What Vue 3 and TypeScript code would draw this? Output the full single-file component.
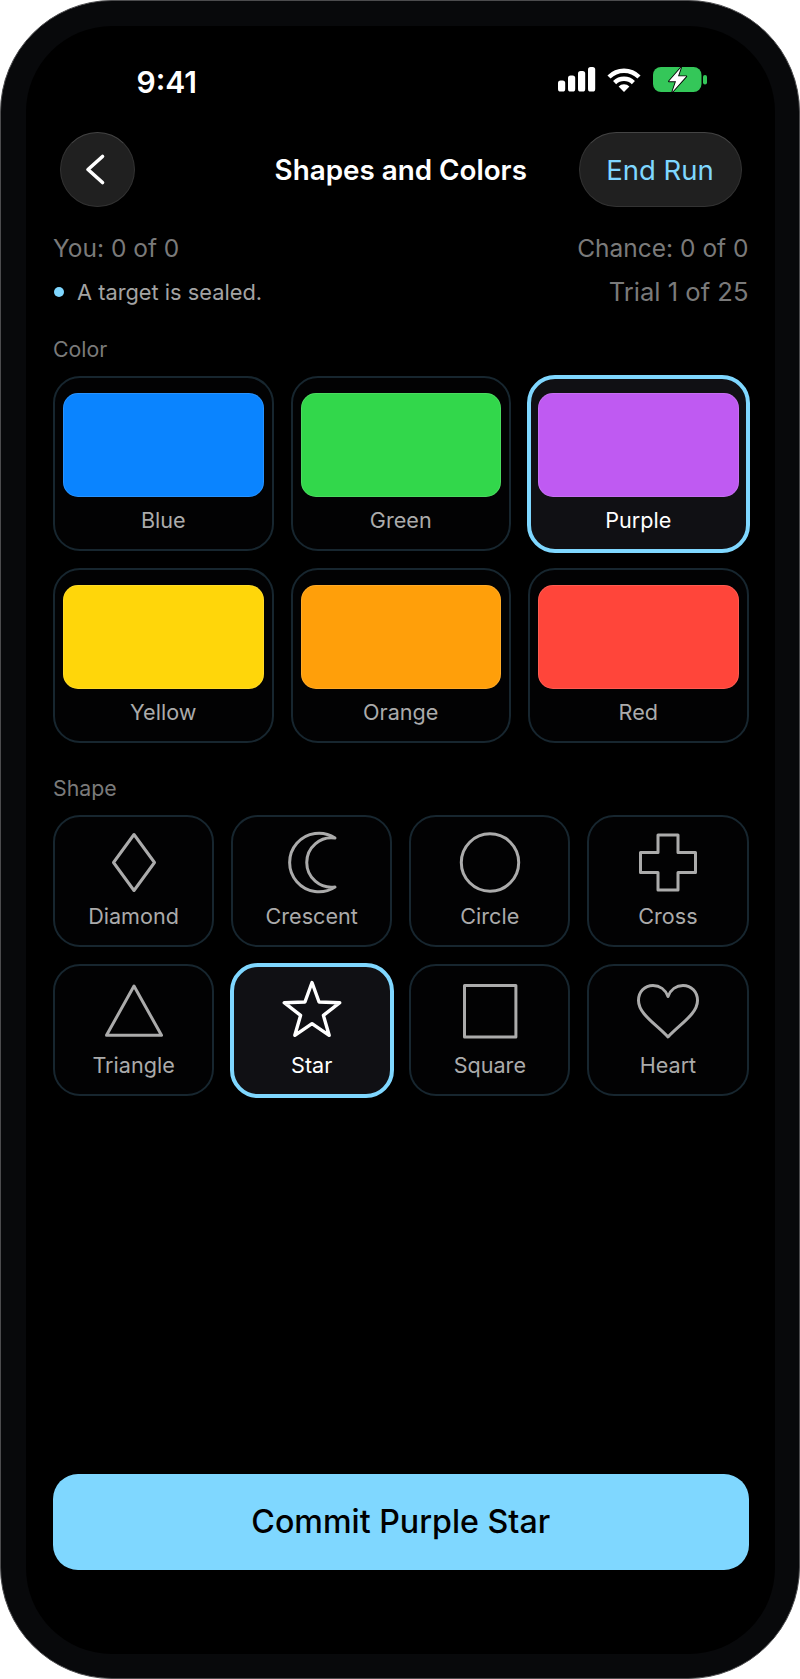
<script setup lang="ts">
const colors = [
  { name: 'Blue', hex: '#0a84ff' },
  { name: 'Green', hex: '#32d74b' },
  { name: 'Purple', hex: '#bf5af2', selected: true },
  { name: 'Yellow', hex: '#ffd60a' },
  { name: 'Orange', hex: '#ff9f0a' },
  { name: 'Red', hex: '#ff453a' },
]
const shapes = ['Diamond', 'Crescent', 'Circle', 'Cross', 'Triangle', 'Star', 'Square', 'Heart']
</script>

<template>
  <div class="phone">
    <div class="screen">
      <div class="status">
        <span class="time">9:41</span>
        <div class="status-icons">
          <svg width="37" height="25" viewBox="0 0 37 25" fill="#fff">
            <rect x="0" y="13.5" width="7.2" height="11" rx="2.6" />
            <rect x="10" y="8.5" width="7.2" height="16" rx="2.6" />
            <rect x="20" y="4" width="7.2" height="20.5" rx="2.6" />
            <rect x="30" y="0" width="7.2" height="24.5" rx="2.6" />
          </svg>
          <svg width="34" height="25" viewBox="0 0 34 25" fill="none" stroke="#fff" stroke-width="4.4">
            <path d="M2 10 A21 21 0 0 1 32 10" />
            <path d="M7.6 15.6 A13.4 13.4 0 0 1 26.4 15.6" />
            <path d="M17 25 L11.6 19.6 A7.6 7.6 0 0 1 22.4 19.6 Z" fill="#fff" stroke="none" />
          </svg>
          <svg class="battery" width="54" height="25" viewBox="0 0 54 25">
            <rect x="0" y="0" width="48.5" height="25" rx="8" fill="#34c759" />
            <rect x="50" y="8" width="4" height="9.5" rx="2" fill="#34c759" />
            <path d="M28 0.5 L16 14.3 H23 L19.3 25 L33.3 9.3 H25 Z" fill="#fff" stroke="#000" stroke-width="1.8" stroke-linejoin="round" paint-order="stroke" />
          </svg>
        </div>
      </div>

      <header class="nav">
        <button class="glass back" aria-label="Back">
          <svg width="75" height="75" viewBox="0 0 75 75" fill="none" stroke="#fff" stroke-width="3.6" stroke-linecap="round" stroke-linejoin="round">
            <path d="M42.5 24.5 L28 37.5 L42.5 50.5" />
          </svg>
        </button>
        <h1 class="title">Shapes and Colors</h1>
        <button class="glass end">End Run</button>
      </header>

      <div class="stats">
        <div class="stat-row">
          <span>You: 0 of 0</span>
          <span>Chance: 0 of 0</span>
        </div>
        <div class="stat-row second">
          <span class="sealed"><i class="dot"></i>A target is sealed.</span>
          <span class="trial">Trial 1 of 25</span>
        </div>
      </div>

      <div class="section-label first">Color</div>
      <div class="color-grid">
        <div v-for="c in colors" :key="c.name" class="card color-card" :class="{ selected: c.selected }">
          <div class="swatch" :style="{ background: c.hex }"></div>
          <div class="label">{{ c.name }}</div>
        </div>
      </div>

      <div class="section-label">Shape</div>
      <div class="shape-grid">
        <div v-for="s in shapes" :key="s" class="card shape-card" :class="{ selected: s === 'Star' }">
          <svg class="shape" width="64" height="64" viewBox="0 0 64 64" fill="none" stroke="currentColor" stroke-width="3" stroke-linejoin="round">
            <path v-if="s === 'Diamond'" d="M32 4.5 L52.5 32.5 L32 60.5 L11.5 32.5 Z" />
            <path v-else-if="s === 'Crescent'" d="M55 8 A29.3 29.3 0 1 0 55 57 A24.75 24.75 0 1 1 55 8 Z" />
            <circle v-else-if="s === 'Circle'" cx="32" cy="32.5" r="28.7" />
            <path v-else-if="s === 'Cross'" d="M22 5 H42 V22.5 H59.5 V42.5 H42 V60 H22 V42.5 H4.5 V22.5 H22 Z" />
            <path v-else-if="s === 'Triangle'" d="M32 7 L59.5 56.3 H4.5 Z" />
            <path v-else-if="s === 'Star'" stroke-width="3.4" d="M32 3.5 L39.05 23 L59.77 23.7 L43.41 36.4 L49.16 56.3 L32 44.7 L14.84 56.3 L20.59 36.4 L4.23 23.7 L24.95 23 Z" />
            <rect v-else-if="s === 'Square'" x="6.5" y="6.4" width="51.4" height="51.6" />
            <path v-else d="M32 17.5 C29.5 10.5 23.5 6.5 17 6.5 C8.5 6.5 2.5 13 2.5 21.5 C2.5 35 20 45 32 58 C44 45 61.5 35 61.5 21.5 C61.5 13 55.5 6.5 47 6.5 C40.5 6.5 34.5 10.5 32 17.5 Z" />
          </svg>
          <div class="label">{{ s }}</div>
        </div>
      </div>

      <button class="commit">Commit Purple Star</button>
    </div>
  </div>
</template>

<style>
html, body { margin: 0; background: #fff; }
</style>

<style scoped>
.phone {
  width: 800px;
  height: 1679px;
  box-sizing: border-box;
  background: #08090b;
  border: 1.5px solid #4c4c4e;
  border-radius: 112px;
  padding: 24.5px;
  font-family: Inter, "Noto Sans", sans-serif;
}
.screen {
  height: 100%;
  box-sizing: border-box;
  background: #000;
  border-radius: 86px;
  padding: 0 26px 84px 27.5px;
  display: flex;
  flex-direction: column;
}
.status {
  height: 40px;
  margin-top: 34px;
  margin-bottom: 32px;
  padding: 0 41.5px 0 83.5px;
  display: flex;
  align-items: center;
  justify-content: space-between;
}
.time {
  color: #fff;
  font-size: 30px;
  font-weight: 600;
  line-height: 40px;
  position: relative;
  top: 2px;
}
.status-icons {
  display: flex;
  align-items: center;
  gap: 12px;
}
.status-icons svg { display: block; overflow: visible; }
.nav {
  display: grid;
  grid-template-columns: 1fr auto 1fr;
  align-items: center;
  height: 75px;
}
.glass {
  box-sizing: border-box;
  height: 75px;
  padding: 0;
  background: #202020;
  border: 1.5px solid #333;
  border-top-color: #444;
  font-family: inherit;
}
.back {
  width: 75px;
  border-radius: 50%;
  justify-self: start;
  margin-left: 6.5px;
  position: relative;
}
.back svg { position: absolute; left: -1px; top: -1px; }
.end {
  width: 163px;
  border-radius: 38px;
  color: #7fd7ff;
  font-size: 27.5px;
  justify-self: end;
  margin-right: 7px;
  padding-top: 1px;
}
.title {
  margin: 0;
  padding-top: 1px;
  color: #fff;
  font-size: 27.8px;
  font-weight: 600;
  line-height: 40px;
}
.stats {
  margin-top: 26px;
  color: #7a7a7a;
  font-size: 24.5px;
  line-height: 30px;
}
.stat-row {
  display: flex;
  justify-content: space-between;
  align-items: center;
}
.stat-row.second { margin-top: 14.5px; }
.trial { font-size: 25.6px; }
.sealed {
  display: flex;
  align-items: center;
  color: #a3a3a3;
  font-size: 21.8px;
}
.dot {
  width: 10px;
  height: 10px;
  border-radius: 50%;
  background: #7fd7ff;
  margin-left: 0.5px;
  margin-right: 13.5px;
}
.section-label {
  color: #7a7a7a;
  font-size: 21.3px;
  line-height: 26px;
  margin-top: 32px;
  margin-bottom: 14px;
}
.section-label.first { margin-top: 29px; }
.color-grid {
  display: grid;
  grid-template-columns: repeat(3, 1fr);
  gap: 17px;
}
.shape-grid {
  display: grid;
  grid-template-columns: repeat(4, 1fr);
  gap: 17px;
}
.card {
  box-sizing: border-box;
  background: #020203;
  border: 2px solid #17262f;
  border-radius: 27px;
  color: #ababab;
  display: flex;
  flex-direction: column;
  align-items: center;
}
.card.selected {
  background: #101014;
  border: 4px solid #7fd7ff;
  border-radius: 28px;
  color: #fff;
  margin: -1.5px;
}
.color-card {
  height: 175px;
  padding: 15px 8px 0;
}
.color-card.selected {
  height: 178px;
  padding: 14.5px 7.5px 0;
}
.swatch {
  width: 100%;
  height: 104px;
  border-radius: 15px;
  box-shadow: inset 0 0 0 1px rgba(255, 255, 255, 0.12);
}
.label {
  font-size: 21.6px;
  line-height: 26px;
  margin-top: 9.7px;
}
.shape-card {
  height: 132px;
  padding-top: 13px;
}
.shape-card.selected {
  height: 135px;
  padding-top: 12.5px;
}
.shape { display: block; overflow: visible; }
.shape-card .label { margin-top: 9.3px; }
.commit {
  margin-top: auto;
  height: 95.5px;
  border: none;
  border-radius: 25px;
  background: #7fd7ff;
  color: #000;
  font-family: inherit;
  font-size: 32.2px;
  font-weight: 500;
}
</style>
